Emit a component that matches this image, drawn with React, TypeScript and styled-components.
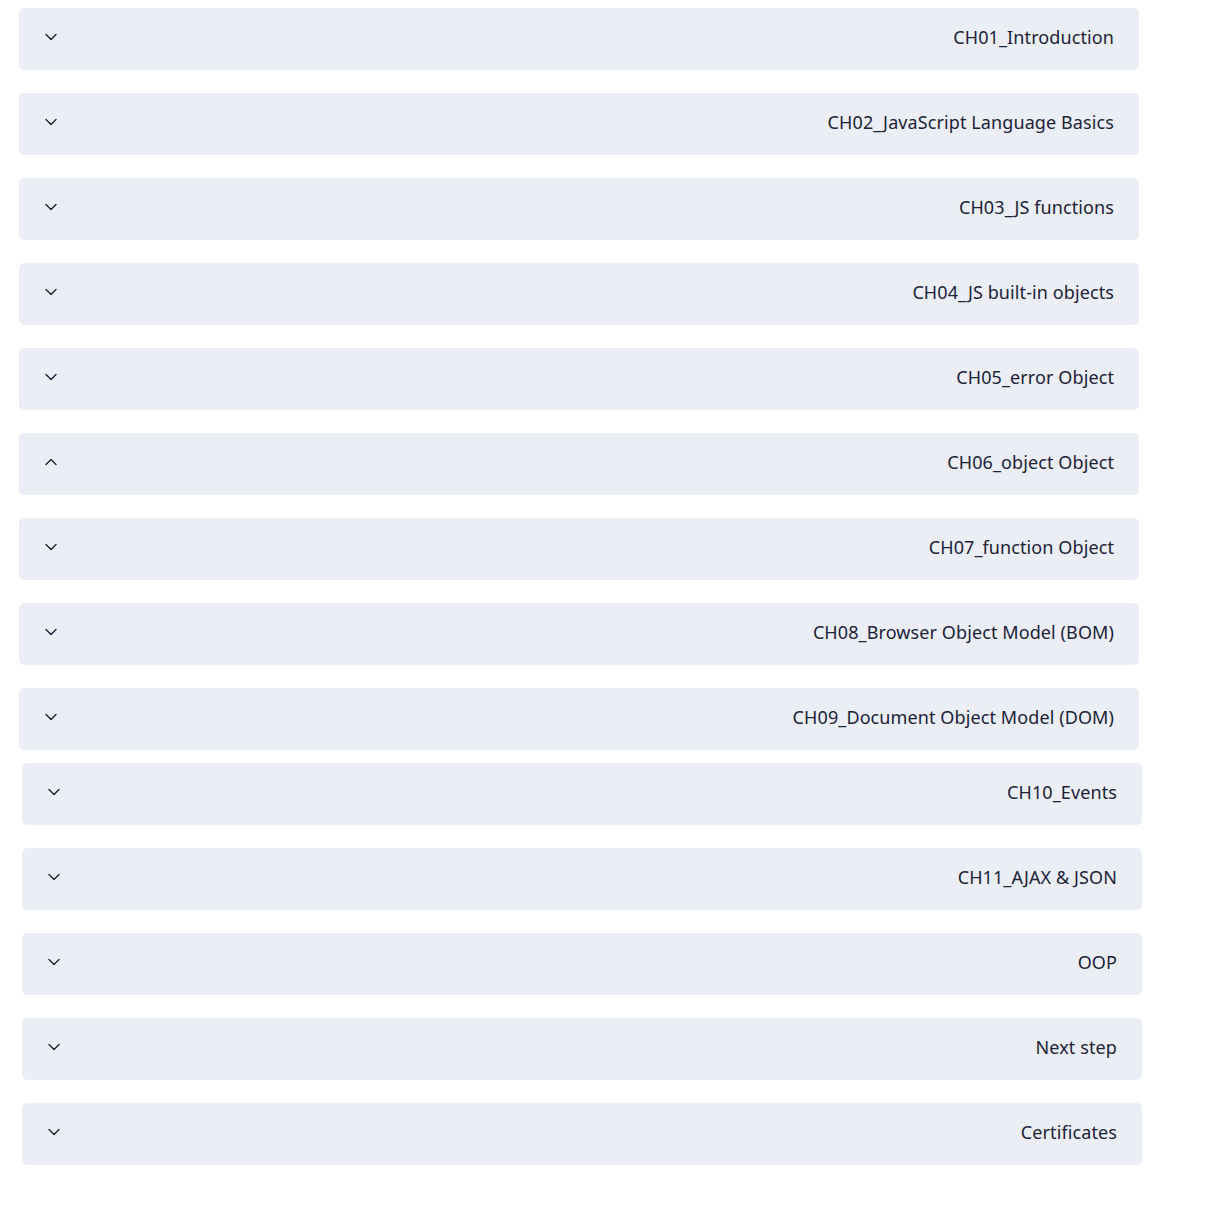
import React from "react";
import styled, { createGlobalStyle } from "styled-components";

const Global = createGlobalStyle`
  html, body { margin: 0; padding: 0; background: #ffffff; }
  body { font-family: "Noto Sans", "Open Sans", sans-serif; }
`;

const Page = styled.div`
  display: flex;
  flex-direction: column;
  gap: 13px;
  padding-top: 8px;
`;

const Group = styled.div<{ $indent: number }>`
  display: flex;
  flex-direction: column;
  gap: 23px;
  padding-left: ${(p) => p.$indent}px;
`;

const Item = styled.div`
  width: 1120px;
  height: 62px;
  box-sizing: border-box;
  background: #ebeef5;
  border-radius: 5px;
  display: flex;
  align-items: center;
  justify-content: space-between;
  padding: 0 25px 0 25px;
`;

const Chevron = styled.svg`
  width: 14px;
  height: 14px;
  margin-top: -4px;
  color: #1c2238;
  flex: none;
`;

const Title = styled.span`
  font-family: "Noto Sans", "Open Sans", sans-serif;
  font-size: 18px;
  font-weight: 400;
  letter-spacing: 0.1px;
  color: #1c2238;
  white-space: nowrap;
  margin-bottom: 4px;
`;

const first = [
  "CH01_Introduction",
  "CH02_JavaScript Language Basics",
  "CH03_JS functions",
  "CH04_JS built-in objects",
  "CH05_error Object",
  "CH06_object Object",
  "CH07_function Object",
  "CH08_Browser Object Model (BOM)",
  "CH09_Document Object Model (DOM)",
];
const second = ["CH10_Events", "CH11_AJAX & JSON", "OOP", "Next step", "Certificates"];

const Icon = ({ up }: { up?: boolean }) => (
  <Chevron viewBox="0 0 14 14" fill="none" stroke="currentColor" strokeWidth={1.4} strokeLinecap="round" strokeLinejoin="round">
    {up ? <path d="M2 9.5 L7 4.5 L12 9.5" /> : <path d="M2 4.5 L7 9.5 L12 4.5" />}
  </Chevron>
);

export default function App() {
  return (
    <>
      <Global />
      <Page>
        <Group $indent={19}>
          {first.map((t) => (
            <Item key={t}>
              <Icon up={t === "CH06_object Object"} />
              <Title>{t}</Title>
            </Item>
          ))}
        </Group>
        <Group $indent={22}>
          {second.map((t) => (
            <Item key={t}>
              <Icon />
              <Title>{t}</Title>
            </Item>
          ))}
        </Group>
      </Page>
    </>
  );
}
